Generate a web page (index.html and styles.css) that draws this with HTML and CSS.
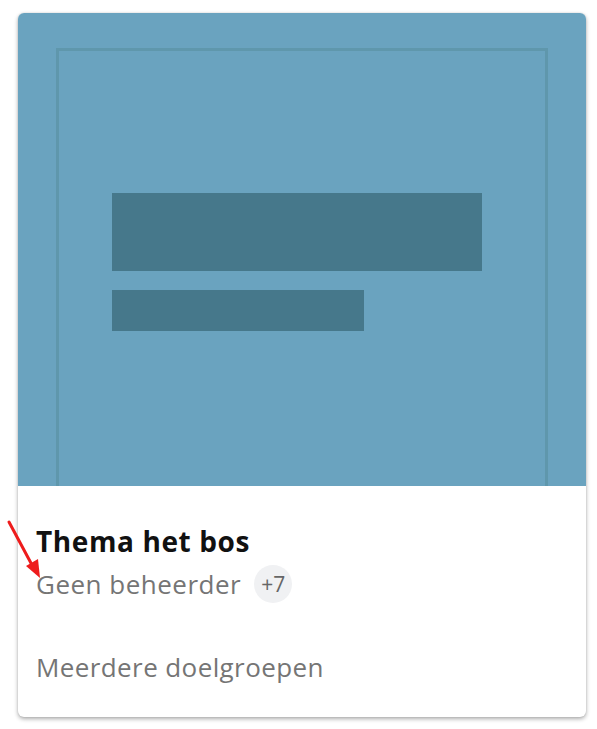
FILE: index.html
```html
<!DOCTYPE html>
<html>
<head>
<meta charset="utf-8">
<link rel="stylesheet" href="styles.css">
</head>
<body>
<div class="page">
  <div class="card">
    <div class="thumb">
      <div class="frame">
        <div class="bar bar-long"></div>
        <div class="bar bar-short"></div>
      </div>
    </div>
    <div class="body">
      <div class="title">Thema het bos</div>
      <div class="meta">
        <span class="owner">Geen beheerder</span>
        <span class="badge">+7</span>
      </div>
      <div class="groups">Meerdere doelgroepen</div>
    </div>
  </div>
  <svg class="arrow" width="44" height="64" viewBox="0 0 44 64">
    <line x1="9" y1="4" x2="32" y2="47" stroke="#ee1c1c" stroke-width="3" stroke-linecap="round"/>
    <polygon points="40,60 26,48 38,41" fill="#ee1c1c"/>
  </svg>
</div>
</body>
</html>
```

FILE: styles.css
```css
html, body {
  margin: 0;
  padding: 0;
  background: #ffffff;
}
.page {
  position: relative;
  padding: 13px 11px 12px 18px;
  font-family: "Open Sans", sans-serif;
}
.card {
  width: 568px;
  height: 704px;
  background: #fff;
  border-radius: 6px;
  overflow: hidden;
  box-shadow: 0 2px 4px rgba(0, 0, 0, 0.32), 0 0 2px rgba(0, 0, 0, 0.12);
  display: flex;
  flex-direction: column;
}
.thumb {
  height: 473px;
  background: #6aa3bf;
  padding: 35px 38px 0;
  box-sizing: border-box;
  display: flex;
}
.frame {
  flex: 1;
  border: 3px solid #5f97ac;
  border-bottom: none;
  padding: 142px 0 0 53px;
  display: flex;
  flex-direction: column;
  gap: 19px;
}
.bar {
  background: #46788b;
}
.bar-long {
  width: 370px;
  height: 78px;
}
.bar-short {
  width: 252px;
  height: 41px;
}
.body {
  padding: 37px 18px 0;
}
.title {
  font-size: 28px;
  font-weight: 700;
  color: #111;
  line-height: 36px;
  letter-spacing: 0.6px;
}
.meta {
  display: flex;
  align-items: center;
  gap: 13px;
  margin-top: 6px;
}
.owner {
  font-size: 26px;
  color: #757575;
  line-height: 38px;
  letter-spacing: 0.5px;
}
.badge {
  width: 38px;
  height: 38px;
  border-radius: 50%;
  background: #f0f1f3;
  color: #666;
  font-size: 21px;
  display: flex;
  align-items: center;
  justify-content: center;
}
.groups {
  margin-top: 47px;
  font-size: 26px;
  color: #757575;
  line-height: 34px;
  letter-spacing: 0.4px;
}
.arrow {
  position: absolute;
  left: 0;
  top: 518px;
}
```
